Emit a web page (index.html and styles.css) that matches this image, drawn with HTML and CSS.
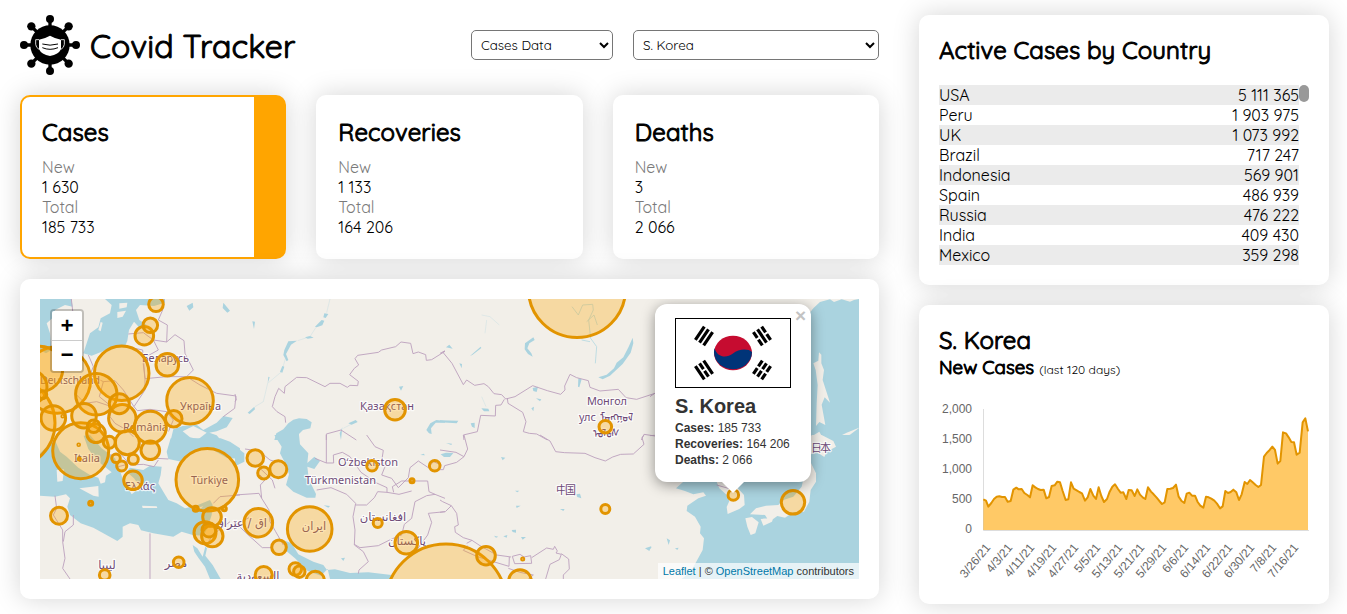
FILE: index.html
```html
<!DOCTYPE html>
<html lang="en">
<head>
<meta charset="utf-8">
<title>Covid Tracker</title>
<link rel="stylesheet" href="styles.css">
</head>
<body>
<div class="app">
  <main class="main">
    <header class="header">
      <div class="brand">
        <svg class="logo" viewBox="0 0 180 180">
          <g stroke="#000" stroke-width="10">
            <path d="M90 12V168M12 90H168M34 34L146 146M146 34L34 146"/>
          </g>
          <circle cx="90" cy="90" r="59"/>
          <circle cx="90" cy="12" r="12"/><circle cx="90" cy="168" r="12"/>
          <circle cx="12" cy="90" r="12"/><circle cx="168" cy="90" r="12"/>
          <circle cx="34" cy="34" r="12.500"/><circle cx="146" cy="34" r="12.500"/>
          <circle cx="34" cy="146" r="12.500"/><circle cx="146" cy="146" r="12.500"/>
          <path d="M57 74Q74 71 90 62Q106 71 123 74V103Q116 118 90 123Q64 118 57 103Z" fill="#fff"/>
          <path d="M57 74H47V88Q48 98 57 103M123 74H133V88Q132 98 123 103" fill="none" stroke="#fff" stroke-width="2.500"/>
          <path d="M67 87Q90 94 114 87M67 98Q90 108 114 98" fill="none" stroke="#000" stroke-width="3"/>
        </svg>
        <h1 class="title">Covid Tracker</h1>
      </div>
      <div class="filters">
        <select class="select select-type"><option>Cases Data</option></select>
        <select class="select select-country"><option>S. Korea</option></select>
      </div>
    </header>
    <section class="stats">
      <article class="card stat stat-active">
        <h2>Cases</h2>
        <p class="muted">New</p><p>1 630</p><p class="muted">Total</p><p>185 733</p>
      </article>
      <article class="card stat">
        <h2>Recoveries</h2>
        <p class="muted">New</p><p>1 133</p><p class="muted">Total</p><p>164 206</p>
      </article>
      <article class="card stat">
        <h2>Deaths</h2>
        <p class="muted">New</p><p>3</p><p class="muted">Total</p><p>2 066</p>
      </article>
    </section>
    <section class="card map-card">
      <div class="map">
        <svg class="map-canvas" viewBox="40 299 819 280">
          <!-- Northern Europe -->
          <g transform="translate(30 290) scale(.33333)">
            <path class="water" d="M30 27H124L128 50L105 45L75 60L72 80L50 100L60 130L64 180L48 190L30 180ZM225 27H405V38L372 48L330 45L318 60L328 90L350 105L330 115L312 95L297 120L292 152L284 172L250 173L215 185L185 197L160 190L170 160L180 130L205 112L212 85L240 70L245 45Z"/>
            <path class="land" d="M268 40L292 38L290 52L268 56ZM262 66L288 62L278 80L262 84ZM205 120L212 96L218 98L212 124Z"/>
            <path class="water" d="M470 48L488 38L490 52L478 62ZM580 38L600 62L592 68L578 54ZM420 460L430 418L458 408L500 404L520 420L560 398L580 378L608 384L590 412L560 424L538 428L560 436L572 450V460Z"/>
            <path class="land" d="M458 424L490 408L530 428L505 448L480 442Z"/>
            <path class="border" d="M295 132L340 128L370 150L410 156L412 105L385 90L398 60L402 27M410 156L435 134L462 152L465 190L490 240L470 260H410L345 266L338 206L385 180L370 150M290 170L338 180L345 266L345 300L312 350L322 362L360 358L410 365L430 390L415 425M470 260L510 285L560 310L618 318L614 355L580 380M175 195L190 230L180 255L220 275L255 272L280 300L312 350M120 260L150 278L135 310L165 340L200 335L245 350M220 275L208 320L245 350L240 380L255 400L290 420L310 440M124 27L130 80L112 110"/>
          </g>
          <!-- Mediterranean and the Levant -->
          <g transform="translate(30 435) scale(.33333)">
            <path class="water" d="M30 55L64 22L100 10L180 0L215 40L255 70L268 100L278 132L292 155L305 178L318 168L330 155L312 130L290 110L300 98L340 105L360 92L395 95L392 120L385 145L400 170L415 195L440 205L465 220L498 212L540 195L548 210L545 240L532 280L520 302L488 300L455 290L430 305L370 295L333 286L325 270L300 265L278 275L278 305L262 318L220 295L190 278L152 265L120 240L112 215L120 190L108 178L75 185L30 182Z"/>
            <path class="land" d="M68 0L90 50L110 65L145 98L180 120L205 128L212 146L225 142L228 122L245 112L215 88L195 68L175 42L160 0ZM148 160L205 153L206 185L190 182ZM80 105L102 103L98 138L82 140ZM336 212L380 214L382 219L338 219ZM484 222L520 214L500 232Z"/>
            <path class="water" d="M410 50L422 10H572L600 20L630 40V72L590 68L540 40L490 50L455 80L415 72ZM488 330L502 340L518 365L526 335L531 340L526 362L548 390L572 432H540L525 395L505 368L493 350Z"/>
            <path class="border" d="M75 182L80 220L70 240L98 285L98 320L105 370L98 400L120 432M130 240L130 270L105 290L100 320M360 295V432M530 330L548 300L600 260M550 205L570 185L630 180M380 70L415 72M240 60L275 60L300 90L340 88L372 95L385 75M265 95L285 90L292 75"/>
          </g>
          <!-- Kazakhstan steppe -->
          <g transform="translate(235 290) scale(.33333)">
            <path class="water" d="M118 450L124 430L145 418L160 400L175 389L192 385L215 387L230 397L226 415L204 420L192 432L192 450ZM574 420L586 400L604 390L630 393V398L602 398L588 415L590 432L582 430ZM268 70L280 72L272 84L265 82ZM240 110L260 90L268 92L262 106L245 112ZM148 180L160 154L186 152L168 164L153 192L160 210L155 214L145 195ZM210 142L225 138L236 143L218 146ZM52 94L60 95L57 117ZM38 368L58 350L60 358L44 372ZM135 245L142 228L148 230L142 248ZM100 260L104 262L98 280ZM492 290L505 288L498 302ZM340 400L362 390L368 396L350 404ZM314 430L322 412L318 450Z"/>
            <path class="river river-faint" d="M285 27L275 68M243 112L225 140L188 152M153 200L140 245L98 280L85 335L60 350M325 415L350 402"/>
            <path class="border" d="M152 398L150 380L126 365L112 350L120 320L131 295L148 310L150 290L185 262L215 263L270 290L285 280L315 280L337 292L345 286L368 287L370 274L344 254L358 235L371 225L360 206L368 196L430 187L440 180L482 170L498 156L527 160L534 191L550 186L572 194L574 211L590 209L630 184M274 450V432L318 420L364 450M0 312L4 330L0 334"/>
          </g>
          <!-- Caspian, Iran and Central Asia -->
          <g transform="translate(235 435) scale(.33333)">
            <path class="water" d="M118 0H192L195 28L220 55L217 84L238 65L255 78L238 102L217 95L220 120L225 140L243 177L241 188L215 188L175 170L153 150L162 118L150 83L135 55L140 35ZM0 33L28 55L28 80L0 94ZM152 318L170 325L190 358L235 380L265 390L276 405L300 403L345 414L400 412L470 420V432H285L278 402L258 422L218 408L180 370L154 348Z"/>
            <path class="border" d="M30 42L72 48L105 75L122 80M75 100L112 135L120 160M75 120L90 135L76 150L80 190L102 225L105 260L122 290L145 330M0 180L72 175L80 190M0 262L42 302L82 338H108M0 270L42 248M240 70L274 84H296L295 60L322 52L345 65L378 112L425 144L456 158V172L492 178L530 168M274 84V0M245 165L288 158L335 178L362 205L354 245L360 285L358 330L385 350L400 380L372 405L370 416M362 210L395 210L418 188L428 170L456 172M358 328L375 338L430 332L470 312L500 300L508 268L530 250L540 200L575 182L600 178M395 0L420 35L445 46L440 78L450 95L440 120L470 130L490 158L520 128L525 98L550 78L580 98L595 80L620 90M476 172L472 155L500 138H578L582 170L600 178L630 190M630 230L580 235L590 262L578 300L545 345L520 362"/>
            <path class="water" d="M266 211L285 213L280 218ZM318 370L330 368L325 378ZM556 60L566 56L570 61Z"/>
          </g>
          <!-- Siberia and Mongolia -->
          <g transform="translate(440 290) scale(.33333)">
            <path class="water" d="M578 143L580 160L572 188L548 222L510 257L488 268L475 262L500 254L522 235L530 218L550 202L566 170ZM18 172L28 164L38 176ZM90 198L122 170L124 174L98 194ZM255 160L280 142L284 150L268 160L262 175L274 190L278 200L264 192L254 178ZM278 294L294 290L290 306L280 303ZM415 265L425 268L418 292L414 290ZM0 391L55 392L50 400L0 397ZM92 400L104 398L104 414L96 410ZM124 355L145 356L148 364L132 364ZM288 325L304 328L300 334ZM58 220L66 222L65 235ZM274 355L282 350L280 364Z"/>
            <path class="river" d="M396 50L415 75L428 45L458 43L460 60L446 90L452 145L470 170L466 220M440 95L462 75L472 105M425 150L450 155"/>
            <path class="river river-faint" d="M125 75L150 80L178 105M140 90L135 130M125 320L138 350"/>
            <path class="border" d="M0 190L15 183L8 186L36 220L70 284L80 270L104 286L132 281L145 290L162 311L185 314L197 327L225 320L278 287L322 302L362 313L375 300L374 288L390 253L410 263L445 272L450 292L480 303L535 298L558 323L590 328L645 310M202 324L204 340L248 367L258 395L250 425L268 430L290 432L322 450M193 328L183 345L167 346L166 378L122 376L112 425L70 435L72 450M604 450L612 433L645 438"/>
          </g>
          <!-- China and the Himalayas -->
          <g transform="translate(440 435) scale(.33333)">
            <path class="water" d="M2 58L18 53L40 54L30 66L12 66ZM183 66L196 68L188 76ZM408 178L420 176L424 190L412 186ZM215 285L228 284L228 293L218 291ZM243 306L258 306L248 314ZM190 304L202 300L200 308ZM360 222L374 222L370 228ZM225 167L238 167L232 172ZM228 212L242 212L230 219ZM18 24L36 26L34 30ZM162 302L175 305L168 308ZM615 340L634 334L628 348Z"/>
            <path class="border" d="M0 45L48 52L72 65L83 42L72 0M72 65L50 82L14 92L10 104L0 104M300 0L330 18L347 50L374 53L435 55L465 68L496 78L518 66L542 58L580 57L612 28L606 8L612 0M0 195L8 200L34 212L50 235L55 270L44 275L46 292L70 308L96 316L120 332L170 360L213 366M34 212L16 230L0 232M82 332L70 346L110 364L160 380L207 394L208 366M217 364L240 358L252 366L272 362L275 385L224 386ZM275 368L320 339L340 343L344 334L352 348L348 354L364 358L358 374L330 388L317 432M364 356L386 372L388 402L370 420V432M205 400L240 412L280 420L265 432M80 325L96 316"/>
          </g>
          <!-- Sea of Okhotsk -->
          <g transform="translate(650 290) scale(.33333)">
            <path class="water" d="M627 27V450H440L460 330L450 260L470 160V80L490 55L510 36L540 28L552 36L575 28L600 35L612 30Z"/>
            <path class="land" d="M507 187L514 194V220L522 240L518 270L540 338L524 322L515 344L526 405L508 396L498 408L500 340L503 285L497 240L490 220L505 212ZM483 440L508 425L522 450H483ZM545 450L590 428L630 412L600 434Z"/>
            <path class="border" d="M0 320L14 310M0 437L14 436"/>
          </g>
          <!-- Yellow Sea, Korea and Japan -->
          <g transform="translate(650 435) scale(.33333)">
            <path class="water" d="M627 0V432H95L122 410L138 382L158 345L162 310L150 295L152 275L135 245L110 228L112 212L145 190L168 182L160 172L130 178L105 168L78 160L100 140L300 120L420 50L430 0Z"/>
            <path class="land" d="M485 0H515L550 18L558 35L530 50L523 66L498 50L484 58L470 30ZM483 84L498 115L498 140L482 165L478 200L462 230L430 232L405 248L382 243L358 260L345 240L300 238L318 220L348 212L385 210L400 195L430 185L455 155L465 110ZM286 250L306 246L326 262L316 295L302 300L292 275ZM332 252L370 248L366 260L340 272ZM200 140L245 142L262 158L282 180L284 210L268 222L233 237L230 216L238 198L228 178L208 160Z"/>
            <path class="water" d="M50 310L60 316L56 330ZM75 340L86 338L82 345ZM0 335L5 337L0 342Z"/>
            <path class="border" d="M200 150L245 163"/>
          </g>
          <g class="labels">
            <text x="142" y="362" textLength="47">Беларусь</text>
            <text x="40" y="384" textLength="60">Deutschland</text>
            <text x="180" y="410" textLength="41">Україна</text>
            <text x="123" y="431" textLength="45">România</text>
            <text x="74" y="462" textLength="26">Italia</text>
            <text x="125" y="490" textLength="30">Ελλάς</text>
            <text x="191" y="484" textLength="37">Türkiye</text>
            <text x="360" y="410" textLength="54">Қазақстан</text>
            <text x="338" y="466" textLength="60">Oʻzbekiston</text>
            <text x="305" y="484" textLength="71">Türkmenistan</text>
            <text class="arabic" x="107" y="569">ليبيا</text>
            <text class="arabic" x="176" y="567">مصر</text>
            <text class="arabic" x="241" y="527">اق / عێراق</text>
            <text class="arabic" x="258" y="580">السعودية</text>
            <text class="arabic" x="314" y="530">ایران</text>
            <text class="arabic" x="383" y="521">افغانستان</text>
            <text class="arabic" x="407" y="545">پاکستان</text>
            <text x="587" y="405" textLength="40">Монгол</text>
            <text x="579" y="421" textLength="17">улс</text>
            <text x="600" y="421" textLength="33">ᠮᠣᠩᠭᠣᠯ</text>
            <text x="593" y="437" textLength="27">ᠤᠯᠤᠰ</text>
            <text x="556" y="494" textLength="20">中国</text>
            <text x="811" y="452" textLength="20">日本</text>
          </g>
          <g class="markers">
            <circle cx="577" cy="289" r="48.500"/><circle cx="446" cy="604.700" r="60.700"/>
            <circle cx="10" cy="423" r="45"/><circle cx="57.300" cy="380" r="33.300"/>
            <circle cx="207.300" cy="479.700" r="31.300"/><circle cx="80.700" cy="450.700" r="28"/>
            <circle cx="121.700" cy="373.200" r="27.300"/><circle cx="190" cy="400.700" r="23.300"/>
            <circle cx="40" cy="369" r="22.700"/><circle cx="309.700" cy="529" r="22.300"/>
            <circle cx="96.300" cy="394.300" r="20.700"/><circle cx="30" cy="387" r="17"/>
            <circle cx="150.300" cy="427.300" r="16"/><circle cx="258.300" cy="522.700" r="14.300"/>
            <circle cx="122.300" cy="418.300" r="13.700"/><circle cx="84" cy="415.700" r="12.300"/>
            <circle cx="53.300" cy="418" r="12.300"/><circle cx="127.300" cy="442.700" r="12"/>
            <circle cx="793" cy="502.300" r="11.700"/><circle cx="167.300" cy="364.700" r="11.300"/>
            <circle cx="406.300" cy="542.700" r="11.300"/><circle cx="520" cy="581" r="11.300"/>
            <circle cx="205" cy="532.700" r="11"/><circle cx="212.300" cy="536" r="10.700"/>
            <circle cx="395" cy="409.700" r="10.300"/><circle cx="119.300" cy="403.700" r="10"/>
            <circle cx="144.300" cy="335.700" r="9.300"/><circle cx="96" cy="433.300" r="9.300"/>
            <circle cx="150.300" cy="450.300" r="9.300"/><circle cx="133" cy="480.300" r="9.300"/>
            <circle cx="212" cy="517" r="9.300"/><circle cx="486" cy="555.700" r="9.300"/>
            <circle cx="315.300" cy="580.300" r="9"/><circle cx="59" cy="515.700" r="8.500"/>
            <circle cx="278.300" cy="469.300" r="8.500"/><circle cx="263.700" cy="575" r="8.500"/>
            <circle cx="255.300" cy="458" r="8.300"/><circle cx="173.700" cy="418.700" r="8.300"/>
            <circle cx="156" cy="304.300" r="7.300"/><circle cx="150.300" cy="325.300" r="7.300"/>
            <circle cx="279" cy="547.300" r="7.300"/><circle cx="209" cy="530" r="7"/>
            <circle cx="93.700" cy="426.300" r="6.300"/><circle cx="295.300" cy="569" r="6.300"/>
            <circle cx="605.300" cy="426.700" r="6.300"/><circle cx="109.300" cy="442.300" r="6"/>
            <circle cx="263.700" cy="473" r="6"/><circle cx="299.300" cy="571.700" r="5.700"/>
            <circle cx="104.700" cy="575" r="5.300"/><circle cx="178.700" cy="562.300" r="5.300"/>
            <circle cx="372" cy="465.700" r="5.300"/><circle cx="434.700" cy="465.700" r="5.300"/>
            <circle cx="733.300" cy="495" r="5.300"/><circle cx="121.700" cy="466" r="5"/>
            <circle cx="133.300" cy="459.300" r="5"/><circle cx="377.700" cy="523" r="4.500"/>
            <circle cx="605.300" cy="509" r="4.500"/><circle cx="116" cy="458.300" r="4.300"/>
            <circle cx="42.700" cy="394.700" r="4"/><circle cx="195.700" cy="508.700" r="2.500"/>
            <circle cx="224.300" cy="508.700" r="2"/><circle cx="90.700" cy="503.300" r="2"/>
            <circle cx="412" cy="480.700" r="2"/><circle cx="522.700" cy="559" r="1"/>
            <circle cx="62.700" cy="416.300" r=".800"/><circle cx="78.700" cy="444.700" r=".800"/>
            <circle cx="79.300" cy="459" r="1"/>
          </g>
        </svg>
        <div class="zoom-control"><span class="zoom-btn">+</span><span class="zoom-btn">−</span></div>
        <div class="popup">
          <span class="popup-close">×</span>
          <svg class="flag" viewBox="0 0 114 68">
            <rect width="114" height="68" fill="#fff"/>
            <ellipse cx="57" cy="34" rx="19" ry="17.300" fill="#c60c30"/>
            <path d="M38.500 29A19 17.300 0 1 0 76 33C72 29 62 30 57 34.500C50 40 41 38 38.500 29Z" fill="#003478"/>
            <g stroke="#000" stroke-width="3.200">
              <g transform="translate(28 17) rotate(-56)"><path d="M-8 -5H8M-8 0H8M-8 5H8"/></g>
              <g transform="translate(86 51) rotate(-56)"><path d="M-8 -5H-1M1 -5H8M-8 0H-1M1 0H8M-8 5H-1M1 5H8"/></g>
              <g transform="translate(86 17) rotate(56)"><path d="M-8 -5H-1M1 -5H8M-8 0H8M-8 5H-1M1 5H8"/></g>
              <g transform="translate(28 51) rotate(56)"><path d="M-8 -5H8M-8 0H-1M1 0H8M-8 5H8"/></g>
            </g>
          </svg>
          <h3 class="popup-title">S. Korea</h3>
          <p><b>Cases:</b> 185 733</p>
          <p><b>Recoveries:</b> 164 206</p>
          <p><b>Deaths:</b> 2 066</p>
        </div>
        <div class="attribution"><a>Leaflet</a> | © <a>OpenStreetMap</a> contributors</div>
      </div>
    </section>
  </main>
  <aside class="side">
    <section class="card list-card">
      <h2>Active Cases by Country</h2>
      <div class="list">
        <div class="rows">
          <div class="row"><span>USA</span><span>5 111 365</span></div>
          <div class="row"><span>Peru</span><span>1 903 975</span></div>
          <div class="row"><span>UK</span><span>1 073 992</span></div>
          <div class="row"><span>Brazil</span><span>717 247</span></div>
          <div class="row"><span>Indonesia</span><span>569 901</span></div>
          <div class="row"><span>Spain</span><span>486 939</span></div>
          <div class="row"><span>Russia</span><span>476 222</span></div>
          <div class="row"><span>India</span><span>409 430</span></div>
          <div class="row"><span>Mexico</span><span>359 298</span></div>
        </div>
        <div class="thumb"></div>
      </div>
    </section>
    <section class="card chart-card">
      <h2>S. Korea</h2>
      <h3 class="subtitle">New Cases <small>(last 120 days)</small></h3>
      <svg class="chart" viewBox="939 399 370 185">
        <path d="M983.500 409V530.500H1309" fill="none" stroke="#ddd"/>
        <g transform="translate(900 300) scale(.33333)">
          <path class="chart-area" d="M250 690V598L258 602L265 620L274 609L282 597L290 590L298 589L306 591L315 591L323 605L332 603L340 569L349 563L356 568L365 567L373 579L382 585L390 592L398 556L406 562L414 567L422 570L431 569L439 595L447 591L455 558L464 556L472 545L480 547L488 573L497 600L505 598L513 547L521 566L530 571L538 576L546 580L555 602L563 592L571 567L580 587L588 597L596 562L604 588L612 606L621 597L629 575L637 560L645 553L654 567L662 578L670 577L679 597L686 570L695 571L704 588L712 568L720 584L729 593L736 597L744 562L753 575L761 583L770 593L778 603L786 612L794 607L802 567L811 566L819 564L828 554L836 590L844 602L853 609L860 581L868 578L876 587L885 587L893 606L901 617L910 623L918 590L926 592L934 596L943 602L951 611L960 625L968 619L976 573L984 579L992 576L1000 569L1009 577L1017 600L1025 583L1034 546L1042 552L1050 540L1058 547L1067 555L1075 561L1083 555L1092 470L1100 459L1109 450L1117 440L1125 450L1133 491L1141 483L1149 397L1158 400L1166 412L1174 426L1182 427L1190 464L1199 458L1208 367L1216 355L1224 394V690Z"/>
          <path class="chart-line" d="M250 598L258 602L265 620L274 609L282 597L290 590L298 589L306 591L315 591L323 605L332 603L340 569L349 563L356 568L365 567L373 579L382 585L390 592L398 556L406 562L414 567L422 570L431 569L439 595L447 591L455 558L464 556L472 545L480 547L488 573L497 600L505 598L513 547L521 566L530 571L538 576L546 580L555 602L563 592L571 567L580 587L588 597L596 562L604 588L612 606L621 597L629 575L637 560L645 553L654 567L662 578L670 577L679 597L686 570L695 571L704 588L712 568L720 584L729 593L736 597L744 562L753 575L761 583L770 593L778 603L786 612L794 607L802 567L811 566L819 564L828 554L836 590L844 602L853 609L860 581L868 578L876 587L885 587L893 606L901 617L910 623L918 590L926 592L934 596L943 602L951 611L960 625L968 619L976 573L984 579L992 576L1000 569L1009 577L1017 600L1025 583L1034 546L1042 552L1050 540L1058 547L1067 555L1075 561L1083 555L1092 470L1100 459L1109 450L1117 440L1125 450L1133 491L1141 483L1149 397L1158 400L1166 412L1174 426L1182 427L1190 464L1199 458L1208 367L1216 355L1224 394"/>
        </g>
        <g class="axis">
          <text x="972" y="413">2,000</text><text x="972" y="443">1,500</text><text x="972" y="473">1,000</text><text x="972" y="503">500</text><text x="972" y="533">0</text>
          <text transform="translate(991 548) rotate(-50)">3/26/21</text>
          <text transform="translate(1013 548) rotate(-50)">4/3/21</text>
          <text transform="translate(1035 548) rotate(-50)">4/11/21</text>
          <text transform="translate(1057 548) rotate(-50)">4/19/21</text>
          <text transform="translate(1079 548) rotate(-50)">4/27/21</text>
          <text transform="translate(1101 548) rotate(-50)">5/5/21</text>
          <text transform="translate(1123 548) rotate(-50)">5/13/21</text>
          <text transform="translate(1145 548) rotate(-50)">5/21/21</text>
          <text transform="translate(1167 548) rotate(-50)">5/29/21</text>
          <text transform="translate(1189 548) rotate(-50)">6/6/21</text>
          <text transform="translate(1211 548) rotate(-50)">6/14/21</text>
          <text transform="translate(1233 548) rotate(-50)">6/22/21</text>
          <text transform="translate(1255 548) rotate(-50)">6/30/21</text>
          <text transform="translate(1277 548) rotate(-50)">7/8/21</text>
          <text transform="translate(1299 548) rotate(-50)">7/16/21</text>
        </g>
      </svg>
    </section>
  </aside>
</div>
</body>
</html>
```
FILE: styles.css
```css
* { box-sizing: border-box; margin: 0; padding: 0; }
body { font-family: Quicksand, Lato, sans-serif; font-size: 16px; line-height: 20px; color: #000; background: #fff; overflow: hidden; }
.app { display: grid; grid-template-columns: 859px 410px; column-gap: 40px; padding: 15px 18px 10px 20px; height: 614px; }
.main { display: flex; flex-direction: column; gap: 20px; }
.header { display: flex; justify-content: space-between; align-items: center; height: 60px; }
.brand { display: flex; align-items: center; gap: 10px; }
.logo { width: 60px; height: 60px; }
.title, h2, .subtitle { font-weight: 400; -webkit-text-stroke: 1px #000; }
.title { font-size: 32px; line-height: 40px; letter-spacing: .1px; padding-top: 1px; }
.filters { display: flex; gap: 20px; }
.select { height: 30px; border: 1px solid #767676; border-radius: 5px; background: #fff; color: #000; font-family: Quicksand, Lato, sans-serif; font-size: 13.333px; letter-spacing: 0; padding-left: 5px; }
.select-type { width: 142px; }
.select-country { width: 246px; }
.card { background: #fff; border-radius: 10px; box-shadow: 0 0 27px rgba(0, 0, 0, .17); }
h2 { font-size: 24px; line-height: 30px; letter-spacing: .09px; }
.stats { display: grid; grid-template-columns: repeat(3, 1fr); gap: 30px; }
.stat { height: 164px; padding: 20px; border: 2px solid #fff; }
.stat h2 { margin-bottom: 10px; }
.stat-active { border-color: orange; background: linear-gradient(orange, orange) right / 30px 100% no-repeat #fff; }
.muted { color: #7a7a7a; }
.map-card { height: 320px; padding: 20px; }
.map { position: relative; height: 280px; background: #f2efe9; overflow: hidden; font-family: "Liberation Sans", Arial, sans-serif; }
.map-canvas { display: block; width: 819px; height: 280px; }
.water { fill: #aad3df; }
.land { fill: #f2efe9; }
.river { fill: none; stroke: #b5d8e1; stroke-width: 2.500; }
.river-faint { opacity: .4; }
.border { fill: none; stroke: #bda3be; stroke-width: 2.800; stroke-linejoin: round; }
.labels { font: 11px "Noto Sans", "DejaVu Sans", "Noto Sans CJK SC", sans-serif; fill: #6e4a77; stroke: rgba(255, 255, 255, .75); stroke-width: 2.500px; paint-order: stroke; stroke-linejoin: round; }
.arabic { font-family: "DejaVu Sans", sans-serif; font-size: 11.500px; text-anchor: middle; }
.markers { fill: orange; fill-opacity: .3; stroke: #e29400; stroke-width: 3; }
.zoom-control { position: absolute; left: 10px; top: 10px; width: 34px; display: flex; flex-direction: column; border: 2px solid rgba(0, 0, 0, .2); border-radius: 4px; background-clip: padding-box; }
.zoom-btn { height: 30px; background: #fff; border-radius: 0 0 2px 2px; text-align: center; font: bold 22px/32px "Liberation Mono", monospace; }
.zoom-btn:first-child { height: 30px; line-height: 34px; border-bottom: 1px solid #ccc; border-radius: 2px 2px 0 0; }
.popup { position: absolute; left: 615px; top: 5px; width: 156px; height: 178px; padding: 14px 20px; border-radius: 12px; background: #fff; color: #333; box-shadow: 0 3px 14px rgba(0, 0, 0, .4); font-size: 12px; line-height: 16px; white-space: nowrap; }
.popup::after { content: ""; position: absolute; left: 66px; top: 177px; width: 24px; height: 12px; background: #fff; clip-path: polygon(0 0, 100% 0, 50% 100%); }
.popup-close { position: absolute; right: 5px; top: 4px; color: #c3c3c3; font: bold 19px/16px "Liberation Sans", sans-serif; }
.flag { display: block; width: 116px; height: 70px; border: 1px solid #000; }
.popup-title { margin: 6px 0 2px; font-size: 20px; line-height: 24px; }
.attribution { position: absolute; right: 0; bottom: 0; padding: 0 5px; background: rgba(255, 255, 255, .7); color: #333; font-size: 11px; line-height: 16px; }
.attribution a { color: #0078a8; }
.side { display: flex; flex-direction: column; gap: 20px; }
.list-card { height: 270px; padding: 20px; }
.list-card h2 { margin-bottom: 20px; }
.list { display: flex; }
.rows { width: 360px; }
.row { display: flex; justify-content: space-between; height: 20px; }
.row:nth-child(odd) { background: #ebebeb; }
.thumb { width: 10px; height: 17px; border-radius: 5px; background: #999; }
.chart-card { height: 299px; padding: 20px; }
.subtitle { font-size: 18.720px; line-height: 24px; }
.subtitle small { font-size: 12px; letter-spacing: .05px; -webkit-text-stroke: 0; }
.chart { display: block; width: 370px; height: 185px; margin-top: 17px; }
.chart-area { fill: orange; fill-opacity: .6; }
.chart-line { fill: none; stroke: #e29400; stroke-width: 6; stroke-linejoin: round; }
.axis { font: 12px "Liberation Sans", Arial, sans-serif; fill: #666; text-anchor: end; }
```
